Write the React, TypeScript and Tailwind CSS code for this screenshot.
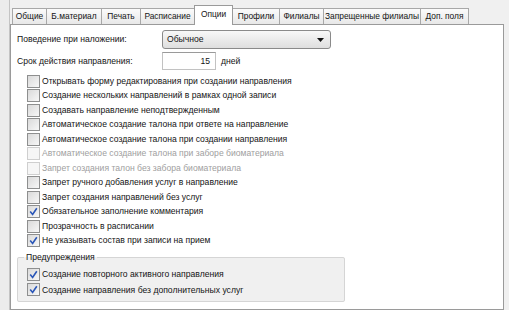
import React from 'react';

const tabs: { label: string; w: string }[] = [
  { label: 'Общие', w: 'w-[35px]' },
  { label: 'Б.материал', w: 'w-[56px]' },
  { label: 'Печать', w: 'w-[40px]' },
  { label: 'Расписание', w: 'w-[55px]' },
  { label: 'Опции', w: 'w-[39px]' },
  { label: 'Профили', w: 'w-[48px]' },
  { label: 'Филиалы', w: 'w-[45px]' },
  { label: 'Запрещенные филиалы', w: 'w-[98px]' },
  { label: 'Доп. поля', w: 'w-[49px]' },
];

const options: { label: string; checked?: boolean; disabled?: boolean }[] = [
  { label: 'Открывать форму редактирования при создании направления' },
  { label: 'Создание нескольких направлений в рамках одной записи' },
  { label: 'Создавать направление неподтвержденным' },
  { label: 'Автоматическое создание талона при ответе на направление' },
  { label: 'Автоматическое создание талона при создании направления' },
  { label: 'Автоматическое создание талона при заборе биоматериала', disabled: true },
  { label: 'Запрет создания талон без забора биоматериала', disabled: true },
  { label: 'Запрет ручного добавления услуг в направление' },
  { label: 'Запрет создания направлений без услуг' },
  { label: 'Обязательное заполнение комментария', checked: true },
  { label: 'Прозрачность в расписании' },
  { label: 'Не указывать состав при записи на прием', checked: true },
];

const warnings = ['Создание повторного активного направления', 'Создание направления без дополнительных услуг'];

const Check = ({ checked, disabled }: { checked?: boolean; disabled?: boolean }) => (
  <div
    className={`w-[13px] h-[13px] shrink-0 border flex items-center justify-center ${
      disabled ? 'border-[#cfcfcf] bg-[#f6f6f6]' : 'border-[#8e8f8f] bg-gradient-to-br from-[#dadada] to-[#f7f7f7]'
    }`}
  >
    {checked && (
      <svg width="9" height="9" viewBox="0 0 9 9">
        <path d="M1.2 4.6 L3.6 7.4 L7.8 1.2" fill="none" stroke="#2a56b8" strokeWidth="1.6" />
      </svg>
    )}
  </div>
);

const OptionRow = ({ label, checked, disabled }: { label: string; checked?: boolean; disabled?: boolean }) => (
  <div className="flex items-center gap-[2px] h-[14.5px]">
    <Check checked={checked} disabled={disabled} />
    <span className={`whitespace-nowrap ${disabled ? 'text-[#a0a0a0]' : 'text-[#141414]'}`}>{label}</span>
  </div>
);

export default function App() {
  return (
    <div
      className="w-[509px] h-[310px] bg-[#f0f0f0] flex overflow-hidden text-[8.6px] leading-none text-[#141414]"
      style={{ fontFamily: '"Liberation Sans", Arial, sans-serif' }}
    >
      {/* left splitter */}
      <div className="w-[10px] shrink-0 border-r border-[#c4c4c4] bg-[#ececec]" />

      <div className="flex flex-col w-[494px] shrink-0">
        {/* TABS */}
        <div className="flex items-end h-[24px] pl-[2px] text-[8.4px]">
          {tabs.map((t) =>
            t.label === 'Опции' ? (
              <div
                key={t.label}
                className={`${t.w} h-[20px] -ml-px bg-white border border-b-0 border-[#9a9a9a] flex items-center justify-center pb-[2px] -mb-px relative z-10 whitespace-nowrap`}
              >
                {t.label}
              </div>
            ) : (
              <div
                key={t.label}
                className={`${t.w} h-[16px] -ml-px first:ml-0 bg-gradient-to-b from-[#fbfbfb] to-[#e8e8e8] border border-b-0 border-[#a8a8a8] flex items-center justify-center whitespace-nowrap`}
              >
                {t.label}
              </div>
            )
          )}
        </div>

        {/* PANEL */}
        <div className="flex-1 bg-white border border-[#9a9a9a] pl-[6px] pt-[5px]">
          <div className="flex items-center h-[19px]">
            <span className="w-[145px] whitespace-nowrap">Поведение при наложении:</span>
            <div className="w-[169px] h-[19px] rounded-[3px] border border-[#8a8a8a] bg-gradient-to-b from-[#f8f8f8] to-[#dedede] flex items-center justify-between pl-[4px] pr-[6px]">
              <span>Обычное</span>
              <svg width="7" height="4" viewBox="0 0 7 4">
                <path d="M0 0 H7 L3.5 4 Z" fill="#111" />
              </svg>
            </div>
          </div>

          <div className="flex items-center h-[18px] mt-[3px]">
            <span className="w-[145px] whitespace-nowrap">Срок действия направления:</span>
            <div className="w-[54px] h-[18px] border border-[#c2c2c2] border-t-[#9a9a9a] flex items-center justify-end pr-[5px]">15</div>
            <span className="ml-[5px]">дней</span>
          </div>

          <div className="flex flex-col pl-[10px] mt-[4px]">
            {options.map((o) => (
              <OptionRow key={o.label} {...o} />
            ))}
          </div>

          <fieldset className="mt-[5px] w-[328px] h-[49px] border border-[#d5d5d5] rounded-[2px] bg-[#f0f0f0] pl-[9px]">
            <legend className="px-[2px] -ml-[3px]">Предупреждения</legend>
            <div className="flex flex-col pt-[5px]">
              {warnings.map((w) => (
                <div key={w} className="flex items-center gap-[2px] h-[15.5px]">
                  <Check checked />
                  <span className="whitespace-nowrap">{w}</span>
                </div>
              ))}
            </div>
          </fieldset>
        </div>
      </div>
      <div className="flex-1" />
    </div>
  );
}
